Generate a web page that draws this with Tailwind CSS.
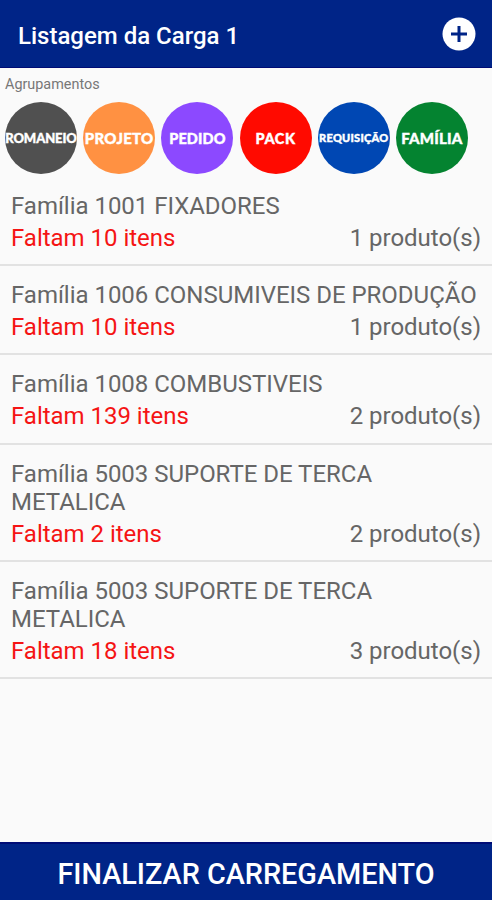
<!DOCTYPE html>
<html lang="pt-BR">
<head>
  <meta charset="UTF-8" />
  <title>Listagem da Carga 1</title>
  <script src="https://cdn.jsdelivr.net/npm/@tailwindcss/browser@4"></script>
</head>
<body class="bg-[#fafafa] font-['Roboto',sans-serif] text-[#666]">
  <div class="h-[900px] flex flex-col overflow-hidden">

    <!-- Cabeçalho -->
    <header class="h-[67.5px] shrink-0 flex items-center justify-between bg-[#002487] border-b border-[#000c75] pl-[18px] pr-4 pt-1">
      <h1 class="pt-px text-[24px] font-medium text-white whitespace-nowrap">Listagem da Carga 1</h1>
      <button class="mb-[2px]" aria-label="Adicionar">
        <svg class="size-[34px] block" viewBox="0 0 34 34">
          <circle cx="17" cy="17" r="16.5" fill="#fff" />
          <path d="M17 9v16M9 17h16" stroke="#002487" stroke-width="3" />
        </svg>
      </button>
    </header>

    <!-- Agrupamentos -->
    <p class="pl-[5px] pt-[7px] text-[14.4px] leading-5 text-[#777]">Agrupamentos</p>
    <nav class="mt-[7.5px] pl-[5px] flex gap-[6.2px] text-white font-black font-['Lato',sans-serif] whitespace-nowrap [-webkit-text-stroke:0.4px_white]">
      <button class="size-[72px] shrink-0 flex items-center justify-center rounded-full pt-px bg-[#505050] text-[13px] tracking-[-0.1px]">ROMANEIO</button>
      <button class="size-[72px] shrink-0 flex items-center justify-center rounded-full pt-px bg-[#ff9142] text-[15px] tracking-[0.3px]">PROJETO</button>
      <button class="size-[72px] shrink-0 flex items-center justify-center rounded-full pt-px bg-[#8c49ff] text-[14.5px] tracking-[0.1px]">PEDIDO</button>
      <button class="size-[72px] shrink-0 flex items-center justify-center rounded-full pt-px bg-[#ff0a00] text-[14.5px] tracking-[0.6px]">PACK</button>
      <button class="size-[72px] shrink-0 flex items-center justify-center rounded-full pt-px bg-[#0047b3] text-[11px] tracking-[0.25px]">REQUISIÇÃO</button>
      <button class="size-[72px] shrink-0 flex items-center justify-center rounded-full pt-px bg-[#048330] text-[15px] tracking-[0.2px]">FAMÍLIA</button>
    </nav>

    <!-- Lista de famílias -->
    <ul class="mt-[3px] flex-1 text-[24px] leading-7 tracking-[-0.02px]">
      <li class="h-[89.2px] px-[11px] pt-[15px] border-b-2 border-[#e2e2e2]">
        <p>Família 1001 FIXADORES</p>
        <div class="mt-1 flex justify-between"><span class="text-[#f51414]">Faltam 10 itens</span><span>1 produto(s)</span></div>
      </li>
      <li class="h-[89.2px] px-[11px] pt-[15px] border-b-2 border-[#e2e2e2]">
        <p>Família 1006 CONSUMIVEIS DE PRODUÇÃO</p>
        <div class="mt-1 flex justify-between"><span class="text-[#f51414]">Faltam 10 itens</span><span>1 produto(s)</span></div>
      </li>
      <li class="h-[89.2px] px-[11px] pt-[15px] border-b-2 border-[#e2e2e2]">
        <p>Família 1008 COMBUSTIVEIS</p>
        <div class="mt-1 flex justify-between"><span class="text-[#f51414]">Faltam 139 itens</span><span>2 produto(s)</span></div>
      </li>
      <li class="h-[117.2px] px-[11px] pt-[15px] border-b-2 border-[#e2e2e2]">
        <p>Família 5003 SUPORTE DE TERCA METALICA</p>
        <div class="mt-1 flex justify-between"><span class="text-[#f51414]">Faltam 2 itens</span><span>2 produto(s)</span></div>
      </li>
      <li class="h-[117.2px] px-[11px] pt-[15px] border-b-2 border-[#e2e2e2]">
        <p>Família 5003 SUPORTE DE TERCA METALICA</p>
        <div class="mt-1 flex justify-between"><span class="text-[#f51414]">Faltam 18 itens</span><span>3 produto(s)</span></div>
      </li>
    </ul>

    <button class="h-[58px] shrink-0 pt-[5px] bg-[#002487] border-t-2 border-[#000c75] text-white text-[28.8px] font-medium whitespace-nowrap">FINALIZAR CARREGAMENTO</button>
  </div>
</body>
</html>
